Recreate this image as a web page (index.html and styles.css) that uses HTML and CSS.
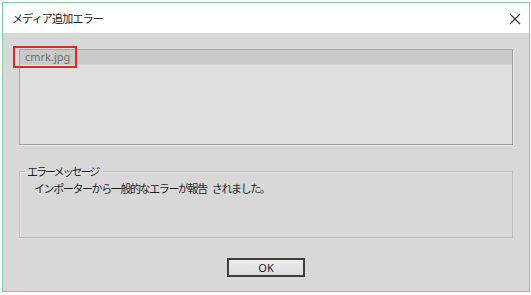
FILE: index.html
```html
<!DOCTYPE html>
<html lang="ja">
<head>
  <meta charset="UTF-8">
  <title>メディア追加エラー</title>
  <link rel="stylesheet" href="styles.css">
</head>
<body>
  <div class="window">
    <div class="title-bar">
      <span class="title">メディア追加エラー</span>
      <svg class="close" width="12" height="12" viewBox="0 0 12 12">
        <path d="M1 1 L11 11 M11 1 L1 11" stroke="#333" stroke-width="1.1" fill="none"/>
      </svg>
    </div>
    <div class="content">
      <div class="file-list">
        <div class="list-header">cmrk.jpg</div>
        <div class="list-body"></div>
        <div class="mark"></div>
      </div>
      <fieldset class="group">
        <legend>エラーメッセージ</legend>
        <div class="message">インポーターから一般的なエラーが報告 されました。</div>
      </fieldset>
      <div class="buttons">
        <button class="ok">OK</button>
      </div>
    </div>
  </div>
</body>
</html>
```

FILE: styles.css
```css
body {
  margin: 0;
  background: #ffffff;
  font-family: "Noto Sans CJK JP", "Noto Sans", sans-serif;
  font-size: 11px;
  color: #1e1e1e;
}

.window {
  margin: 2px 0 0 2px;
  width: 528px;
  height: 290px;
  border: 1px solid #7ccf96;
  box-sizing: border-box;
  display: flex;
  flex-direction: column;
}

.title-bar {
  height: 30px;
  background: #ffffff;
  display: flex;
  align-items: center;
  justify-content: space-between;
  padding: 0 8px 0 9px;
  flex-shrink: 0;
}

.title {
  font-size: 11px;
  letter-spacing: -0.8px;
  color: #222;
}

.close {
  display: block;
  margin-top: 1px;
}

.content {
  flex: 1;
  background: #d8d8d8;
  padding: 16px 16px 0 16px;
}

.file-list {
  position: relative;
  height: 96px;
  box-sizing: border-box;
  border: 1px solid #9c9c9c;
  border-top-color: #a8a8a8;
  border-left-color: #a8a8a8;
  box-shadow: 1px 1px 0 #eeeeee;
  display: flex;
  flex-direction: column;
}

.list-header {
  height: 14px;
  line-height: 14px;
  background: #c9c9c9;
  color: #6e6e6e;
  padding-left: 5px;
  font-family: "Noto Sans", sans-serif;
  font-size: 11px;
  border-bottom: 1px solid #d2d2d2;
}

.list-body {
  flex: 1;
  background: #dfdfdf;
}

.mark {
  position: absolute;
  left: -7px;
  top: -4px;
  width: 60px;
  height: 18px;
  border: 2px solid #e3262a;
}

.group {
  margin: 20px 0 0 0;
  padding: 0;
  height: 73px;
  box-sizing: border-box;
  border: 1px solid #bdbdbd;
  box-shadow: inset 1px 1px 0 #e6e6e6;
}

.group legend {
  margin-left: 5px;
  padding: 0 5px 0 2px;
  line-height: 12px;
  letter-spacing: -2px;
}

.message {
  margin-top: 4px;
  padding-left: 14px;
  line-height: 14px;
  letter-spacing: -1.4px;
  word-spacing: 4px;
}

.buttons {
  display: flex;
  justify-content: center;
  margin-top: 20px;
}

.ok {
  width: 78px;
  height: 19px;
  box-sizing: border-box;
  border: 2px solid #3f3f3f;
  background: linear-gradient(#ececec, #dcdcdc);
  font-family: "Noto Sans", sans-serif;
  font-size: 11px;
  color: #1e1e1e;
  padding: 0;
}
```
